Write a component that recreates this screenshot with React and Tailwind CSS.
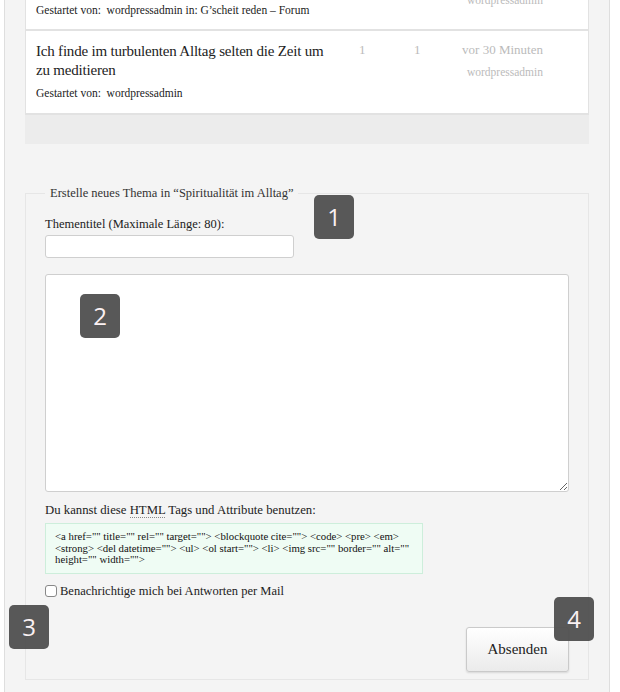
import React from "react";

const serif = { fontFamily: '"Liberation Serif", "DejaVu Serif", serif' };

function Badge({ n, className }) {
  return (
    <div
      className={
        "absolute flex h-[44px] w-[40px] items-center justify-center rounded-[5px] bg-[#4f4f4f]/95 text-[24px] text-[#fbf1f3] " +
        className
      }
      style={{ fontFamily: '"Open Sans", "Noto Sans", sans-serif' }}
    >
      {n}
    </div>
  );
}

export default function App() {
  return (
    <div className="relative h-[692px] overflow-hidden bg-white text-[#222]" style={serif}>
      {/* grey panel */}
      <div className="ml-[4px] h-full w-[606px] border-x border-[#dedede] bg-[#f4f4f4] px-[20px]">
        {/* topic table */}
        <div className="w-[564px]">
          <div className="flex h-[31px] items-end justify-between overflow-hidden border-x border-b-2 border-[#e2e2e2] bg-white pl-[10px] pr-[45px]">
            <div className="mb-[12px] text-[11.5px] leading-[14px]">
              Gestartet von:&nbsp; wordpressadmin in: G’scheit reden – Forum
            </div>
            <div className="mb-[22px] text-[11.5px] leading-[14px] text-[#bbb]">wordpressadmin</div>
          </div>
          <div className="flex h-[84px] border-x border-b-2 border-[#e2e2e2] bg-white pl-[10px] pr-[45px] pt-[11px]">
            <div className="w-[296px]">
              <div className="text-[15px] leading-[19px] tracking-[-0.2px]">
                Ich finde im turbulenten Alltag selten die Zeit um zu meditieren
              </div>
              <div className="mt-[6px] text-[11.5px] leading-[14px]">Gestartet von:&nbsp; wordpressadmin</div>
            </div>
            <div className="w-[55px] pl-[27px] text-[13px] leading-[16px] text-[#bbb]">1</div>
            <div className="w-[50px] pl-[27px] text-[13px] leading-[16px] text-[#bbb]">1</div>
            <div className="flex-1 text-right text-[13px] text-[#bbb]">
              <div className="leading-[16px]">vor 30 Minuten</div>
              <div className="mt-[7px] text-[11.5px] leading-[14px]">wordpressadmin</div>
            </div>
          </div>
          <div className="h-[29px] bg-[#ececec]" />
        </div>

        {/* new topic form */}
        <fieldset className="mt-[41px] h-[495px] w-[564px] border border-[#e6e6e6] px-[19px]">
          <legend className="px-[5px] text-[12.5px] leading-[16px] text-[#333]">
            Erstelle neues Thema in “Spiritualität im Alltag”
          </legend>
          <label className="mt-[15px] block text-[12.5px] leading-[17px]">Thementitel (Maximale Länge: 80):</label>
          <input
            type="text"
            className="mt-[2px] block h-[23px] w-[249px] rounded-[3px] border border-[#cfcfcf] bg-white"
          />
          <textarea className="mt-[16px] block h-[218px] w-[524px] rounded-[3px] border border-[#cfcfcf] bg-white" />
          <p className="mt-[10px] text-[12.75px] leading-[16px]">
            Du kannst diese{" "}
            <abbr className="border-b border-dotted border-[#888] no-underline">HTML</abbr> Tags und Attribute benutzen:
          </p>
          <div className="mt-[5px] w-[378px] border border-[#cdeedb] bg-[#effcf4] px-[9px] py-[7px] text-[10.75px] leading-[11.5px] text-[#111]">
            &lt;a href="" title="" rel="" target=""&gt; &lt;blockquote cite=""&gt; &lt;code&gt; &lt;pre&gt; &lt;em&gt;
            <br />
            &lt;strong&gt; &lt;del datetime=""&gt; &lt;ul&gt; &lt;ol start=""&gt; &lt;li&gt; &lt;img src="" border="" alt=""
            <br />
            height="" width=""&gt;
          </div>
          <label className="mt-[9px] flex items-center gap-[3px] text-[12.5px] leading-[16px]">
            <span className="inline-block h-[12px] w-[12px] rounded-[3px] border border-[#888] bg-white" />
            Benachrichtige mich bei Antworten per Mail
          </label>
          <div className="mt-[28px] flex justify-end">
            <button className="h-[45px] w-[103px] rounded-[3px] border border-[#cacaca] bg-gradient-to-b from-white to-[#ebebeb] text-[15px] text-[#222] shadow-[0_1px_2px_rgba(0,0,0,0.12)]">
              Absenden
            </button>
          </div>
        </fieldset>
      </div>

      <Badge n="1" className="left-[314px] top-[195px]" />
      <Badge n="2" className="left-[80px] top-[294px]" />
      <Badge n="3" className="left-[9px] top-[605px]" />
      <Badge n="4" className="left-[554px] top-[597px]" />
    </div>
  );
}
